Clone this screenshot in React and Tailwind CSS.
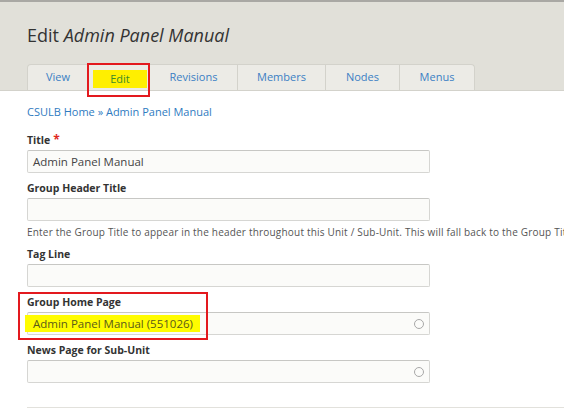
const TABS = [
    { label: 'View', w: 'w-[62px]' },
    { label: 'Edit', w: 'w-[61px]', active: true },
    { label: 'Revisions', w: 'w-[88px]' },
    { label: 'Members', w: 'w-[88px]' },
    { label: 'Nodes', w: 'w-[74px]' },
    { label: 'Menus', w: 'w-[75px]' },
];

function Label({ children, required }) {
    return (
        <div className="text-[10.5px] font-bold text-[#333] leading-[14px] mb-[3px]">
            {children}
            {required && <span className="text-[#e0281e] ml-[3px] text-[12px]">*</span>}
        </div>
    );
}

function Field({ value, autocomplete, highlight }) {
    return (
        <div className="w-[403px] h-[23px] border border-[#d6d6d3] border-t-[#c7c7c4] bg-[#fbfbf9] rounded-[2px] flex items-center px-[5px] relative">
            {value && (
                <span className={`text-[11.5px] ${highlight ? 'bg-[#fffc00] -ml-[8px] pl-[8px] pr-[7px] h-[17px] flex items-center text-[#5a5a1a]' : 'text-[#444]'}`}>
                    {value}
                </span>
            )}
            {autocomplete && (
                <span className="absolute right-[5px] top-[6px] w-[10px] h-[10px] rounded-full border-[1.5px] border-[#a8a8a8]" />
            )}
        </div>
    );
}

export default function App() {
    return (
        <div className="w-[564px] h-[412px] overflow-hidden bg-white relative" style={{ fontFamily: '"Open Sans", "DejaVu Sans", sans-serif' }}>
            <div className="bg-[#e1e0d9] border-t-[2px] border-[#a9a8a4] border-b border-b-[#d3d2cb] pl-[27px]">
                <h1 className="pt-[21px] h-[62px] text-[18px] text-[#333] leading-[24px]">
                    Edit <em>Admin Panel Manual</em>
                </h1>
                <div className="flex h-[26px]">
                    {TABS.map((t, i) => (
                        <div
                            key={t.label}
                            className={`${t.w} h-full bg-[#ecebe6] border-t border-r border-[#d3d2cb] ${i === 0 ? 'border-l rounded-tl-[4px]' : ''} ${i === TABS.length - 1 ? 'rounded-tr-[4px]' : ''} flex items-center justify-center relative`}
                        >
                            {t.active ? (
                                <>
                                    <span className="absolute left-[4px] right-[2px] top-[5px] h-[18px] bg-[#ffef00] flex items-center justify-center text-[11px] text-[#3d8a2a]">
                                        {t.label}
                                    </span>
                                    <span className="absolute -left-[2px] -right-[1px] -top-[2px] h-[34px] border-[2px] border-[#e3191e]" />
                                </>
                            ) : (
                                <span className="text-[11px] text-[#3b7fc4]">{t.label}</span>
                            )}
                        </div>
                    ))}
                </div>
            </div>

            <div className="pl-[27px] pt-[14px]">
                <div className="text-[11px] text-[#2f7bbf] leading-[14px]">CSULB Home » Admin Panel Manual</div>

                <div className="mt-[14px]">
                    <Label required>Title</Label>
                    <Field value="Admin Panel Manual" />
                </div>

                <div className="mt-[8px]">
                    <Label>Group Header Title</Label>
                    <Field />
                    <div className="text-[10px] text-[#555] mt-[5px] whitespace-nowrap leading-[12px] tracking-[0.2px]">
                        Enter the Group Title to appear in the header throughout this Unit / Sub-Unit. This will fall back to the Group Title if left blank.
                    </div>
                </div>

                <div className="mt-[9px]">
                    <Label>Tag Line</Label>
                    <Field />
                </div>

                <div className="mt-[8px] relative">
                    <span className="absolute -left-[9px] -top-[3px] w-[190px] h-[48px] border-[2px] border-[#e3191e] z-10 pointer-events-none" />
                    <Label>Group Home Page</Label>
                    <Field value="Admin Panel Manual (551026)" autocomplete highlight />
                </div>

                <div className="mt-[8px]">
                    <Label>News Page for Sub-Unit</Label>
                    <Field autocomplete />
                </div>

                <div className="mt-[24px] border-t border-[#e2e1dc]" />
            </div>
        </div>
    );
}
